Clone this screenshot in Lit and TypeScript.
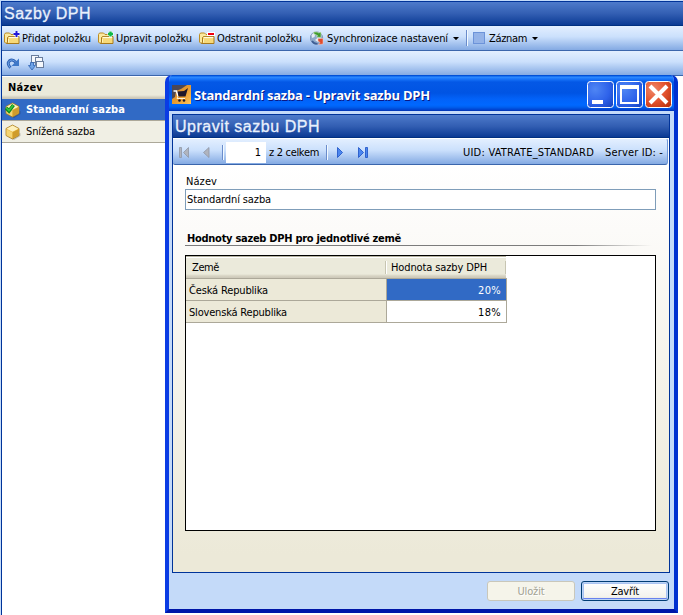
import { LitElement, html, css, svg } from "lit";
import { customElement, property } from "lit/decorators.js";

/** A label whose tracking is adjusted so that it fills a given width. */
@customElement("fit-label")
class FitLabel extends LitElement {
  @property() text = "";
  @property({ type: Number }) w = 0;
  static styles = css`
    :host { display: inline-block; white-space: pre; flex: none; }
  `;
  render() {
    return html`<span>${this.text}</span>`;
  }
  updated() {
    const s = this.renderRoot.querySelector("span") as HTMLElement;
    s.style.letterSpacing = "0px";
    const natural = s.getBoundingClientRect().width;
    s.style.letterSpacing = (this.w - natural) / this.text.length + "px";
  }
}

const t = (text: string, w: number) => html`<fit-label .text=${text} .w=${w}></fit-label>`;

const folder = (badge: unknown) => html`<svg class="ic" width="17" height="16" viewBox="0 0 17 16">
  <path d="M.5 4.500L1.500 3H5.500L7 4.500H12.500V13H1.500L.5 12Z" fill="#fbe9a0" stroke="#bd8d22"/>
  <path d="M3.500 12.500V7.500L4.500 6.500H15V13.500H2.500Z" fill="#f7d978" stroke="#a87a1c"/>
  <path d="M5 7.500H14.200" stroke="#fffbe0" stroke-width="1.200"/><path d="M4.500 9V12.500" stroke="#fff3b8"/>${badge}</svg>`;
const plus = (c: string) => svg`<path d="M12.500 1V7M9.500 4H15.500" stroke="#fff" stroke-width="3.400"/><path d="M12.500 1V7M9.500 4H15.500" stroke=${c} stroke-width="2"/>`;
const greenPlus = svg`<path d="M12.500 1V7M9.500 4H15.500" stroke="#fff" stroke-width="3"/><path d="M12.500 1.500V6.500M10 4H15" stroke="#10b848" stroke-width="2.400"/>`;
const minus = svg`<rect x="8" y="2" width="8" height="4" fill="#fff"/><rect x="9" y="3" width="6" height="2" fill="#f00010"/>`;

const globe = html`<svg class="ic" width="16" height="16" viewBox="0 0 16 16">
  <circle cx="6.500" cy="8" r="6.200" fill="#8ea9cc" stroke="#7b8fb2" stroke-width=".8"/>
  <path d="M1.500 5Q3 2.500 5.500 3L4.500 7L2 8ZM8 7.500L11 8L8 12L5 10Z" fill="#e6edf5"/>
  <path d="M3.500 2H7.500L8.500 3L11 2V7.500L6.500 7L7.500 5.500L4 4Z" fill="#3f9a2e" stroke="#d4ecc8" stroke-width=".6"/>
  <path d="M8 8.500H13V14L8.500 14.500L10 12.500L8 11Z" fill="#e04b2c" stroke="#f7cfc4" stroke-width=".5"/>
  <path d="M2 11Q4 14 7.500 13.800" stroke="#3f5f96" fill="none" stroke-width="1.600"/></svg>`;

const cube = (checked: boolean) => html`<svg class="cube" width="16" height="16" viewBox="0 0 16 16">
  <path d="M3 13L9 16L15.500 12V9Z" fill="#000" opacity=".18"/>
  <path d="M7.500 1L14 4.500V11.500L7.500 15L1 11.500V4.500Z" fill="#e7b63c" stroke="#a47c28" stroke-width=".8"/>
  <path d="M7.500 1.500L13.500 4.700L7.500 7.800L1.500 4.700Z" fill="#fdf1bd"/>
  <path d="M1.500 5.200L7.200 8.300V14.200L1.500 11.200Z" fill="#f4d474"/>
  <path d="M13.500 5.200L7.800 8.300V14.200L13.500 11.200Z" fill="#cf9c2c"/>
  ${checked ? svg`<path d="M1 6L4 9L8.500 3" fill="none" stroke="#0d8a1c" stroke-width="3.600"/><path d="M1.300 6L4 8.500L8.200 3.300" fill="none" stroke="#37c93e" stroke-width="1.600"/>` : ""}</svg>`;

const arrow = html`<svg class="drop" width="6" height="3" viewBox="0 0 6 3"><path d="M0 0H6L3 3.200Z" fill="#000"/></svg>`;

@customElement("vat-dialog")
class VatDialog extends LitElement {
  static styles = css`
    * { box-sizing: border-box; }
    :host { display: block; }
    svg { display: block; flex: none; }
    .win { width: 513px; height: 538px; background: #c4daf9; border-radius: 7px 7px 0 0; overflow: hidden;
      display: flex; flex-direction: column; border: solid #0831d9; border-width: 0 4px 4px;
      border-color: #0040e0 #0030d0 #0016a8 #0a3ce4; }
    .title { height: 36px; margin: 0 -4px; flex: none; display: flex; align-items: center; padding: 0 6px 0 7px;
      background: linear-gradient(#0048c8 0, #0058e6 1px, #2f8bff 2px, #1875fa 4px, #0458e6 7px, #0054e3 18px, #0262f8 24px, #0068ff 30px, #0060f0 32px, #0040cc 35px, #0030a8 36px); }
    .title fit-label { font: bold 13px/16px "Open Sans", sans-serif; color: #fff; text-shadow: 1px 1px 0 #0a1883; margin: 3px 0 0 3px; }
    .logo { margin-top: 2px; }
    .ctl { margin-left: auto; display: flex; gap: 2px; margin-top: 2px; }
    .body { margin: 3px 4px 0 3px; height: 459px; border: 1px solid #003399; flex: none; display: flex; flex-direction: column;
      background: linear-gradient(#fff 50px, #fcfbf9 25%, #ece9d8 96%); }
    .head { height: 23px; flex: none; background: linear-gradient(#4e7bcb, #335fb3 50%, #0b3a94); color: #e9f1fd; padding: 2px 0 0 2px;
      font: 16px/20px "Liberation Sans", Arial, sans-serif; -webkit-text-stroke: .3px #e9f1fd; border-bottom: 1px solid #003080; }
    .bar { height: 27px; flex: none; border-top: 1px solid #fff; border-bottom: 1px solid #3b66ac; border-radius: 0 3px 3px 2px;
      border-right: 1px solid #6f98d8; margin-right: 1px;
      background: linear-gradient(#e3efff, #cbe0fc 45%, #84aae3); display: flex; align-items: center; padding: 1px 4px 0 5px; }
    .sep { width: 2px; height: 15px; border-left: 1px solid #6a8ccb; border-right: 1px solid #f1f9ff; flex: none; }
    .num { width: 40px; height: 21px; background: #fff; text-align: right; padding: 4px 5px 0 0; line-height: 14px; margin: 0 3px 0 2px; }
    .bar fit-label { margin-top: 1px; }
    .uid { margin-left: auto; margin-right: 11px; }
    .form { padding: 10px 13px 0 12px; display: flex; flex-direction: column; }
    .lbl { height: 14px; padding-left: 1px; }
    .input { height: 21px; border: 1px solid #7f9db9; background: #fff; padding: 3px 0 0 1px; }
    .sect { margin-top: 22px; height: 13px; font-weight: bold; padding-left: 2px; }
    .rule { height: 1px; margin: 0 4px 9px 0; background: linear-gradient(90deg, #7c7c7c 390px, transparent); }
    .grid { height: 276px; border: 1px solid #000; background: #fff; }
    .gh { width: 320px; height: 22px; display: flex; background: linear-gradient(#b5b29f 0, #b5b29f 1px, #fff 1px, #fff 2px, #ebeadb 2px, #ebeadb 18px, #d6d2c2 20px, #cbc7b8 22px); }
    .gh div { height: 22px; padding: 5px 0 0 5px; position: relative; }
    .gh div::after { content: ""; position: absolute; right: -1px; top: 5px; height: 13px; border-left: 1px solid #c7c5b2; border-right: 1px solid #fff; }
    .gh .c1 { width: 200px; padding-left: 6px; } .gh .c2 { width: 120px; }
    .gr { display: flex; height: 22px; }
    .gr div { border-top: 1px solid #aca899; height: 23px; padding-top: 5px; }
    .gr .a { width: 201px; background: #ece9d8; border-right: 1px solid #aca899; padding-left: 3px; }
    .gr .b { width: 120px; border-right: 1px solid #aca899; text-align: right; padding-right: 5px; }
    .gr .sel { background: #316ac5; color: #fff; }
    .gr.last div { border-bottom: 1px solid #aca899; }
    .foot { display: flex; justify-content: flex-end; gap: 6px; padding: 8px 5px 0 0; }
    .btn { width: 88px; height: 20px; border: 1px solid #003c74; border-radius: 3px; text-align: center; padding-top: 3px;
      background: linear-gradient(#fff, #f4f3ee 80%, #e5e3da); box-shadow: inset 0 0 0 1px #bcd4f6, inset 0 -2px 0 #6982ee, inset 0 0 0 2px #a9c3f2; }
    .btn.off { border-color: #c9c7ba; background: #f5f4ea; color: #a1a192; box-shadow: none; text-shadow: 1px 1px 0 #fff; }
  `;
  render() {
    return html`<div class="win">
      <div class="title">
        <svg class="logo" width="19" height="19" viewBox="0 0 19 19"><defs><linearGradient id="o" x1="0" y1="0" x2="1" y2="1"><stop offset="0" stop-color="#c88a3a"/><stop offset=".5" stop-color="#e89a2e"/><stop offset="1" stop-color="#ffc45a"/></linearGradient></defs>
          <rect width="19" height="19" fill="url(#o)"/><path d="M0 0H15L9 4L4 6L3 12L0 14Z" fill="#4c4754"/><path d="M1.500 6H4.500L6 11" fill="none" stroke="#fff" stroke-width="1.600"/><path d="M5.500 6.500L12 6L16 3L13.500 11.500H6.500Z" fill="#20182a"/><path d="M6 11L5 13.500H13" fill="none" stroke="#fff3d6" stroke-width="1"/><circle cx="7.500" cy="15.500" r="1.300" fill="#20182a"/><circle cx="12" cy="15.500" r="1.300" fill="#20182a"/></svg>
        ${t("Standardní sazba - Upravit sazbu DPH", 236)}
        <div class="ctl">
          ${["min", "max", "close"].map((k) => html`<svg width="27" height="27" viewBox="0 0 27 27"><defs>
            <radialGradient id="b" cx=".3" cy=".3" r=".9"><stop offset="0" stop-color="#4f86f4"/><stop offset=".6" stop-color="#2e62ea"/><stop offset="1" stop-color="#1846c4"/></radialGradient>
            <radialGradient id="r" cx=".3" cy=".3" r=".9"><stop offset="0" stop-color="#f0886a"/><stop offset=".55" stop-color="#e2512c"/><stop offset="1" stop-color="#b8300c"/></radialGradient></defs>
            <rect x=".5" y=".5" width="26" height="26" rx="3" fill=${k === "close" ? "url(#r)" : "url(#b)"} stroke="#fff"/>
            ${k === "min" ? svg`<rect x="5" y="19" width="11" height="4" fill="#fff"/>` : k === "max" ? svg`<path d="M5 5V22H22V5Z" fill="none" stroke="#fff" stroke-width="2"/><path d="M4 6H23" stroke="#fff" stroke-width="4"/>` : svg`<path d="M5 5L22 22M22 5L5 22" stroke="#fff" stroke-width="4"/>`}</svg>`)}
        </div>
      </div>
      <div class="body">
        <div class="head">${t("Upravit sazbu DPH", 145)}</div>
        <div class="bar">
          <svg width="44" height="13" viewBox="0 0 44 13"><g fill="#b0b4be" stroke="#8f97a6" stroke-width=".8"><path d="M1.500 1.500H3.500V11.500H1.500ZM10.500 1.500V11.500L5.500 6.500ZM31 1.500V11.500L25.500 6.500Z"/></g></svg>
          <div class="sep"></div>
          <div class="num">1</div>
          ${t("z 2 celkem", 50)}
          <svg width="7" height="1"></svg><div class="sep"></div>
          <svg width="41" height="13" viewBox="0 0 41 13"><g fill="#4b86ee" stroke="#1a4fc4" stroke-width=".8"><path d="M9.500 1.500V11.500L14.500 6.500ZM30.500 1.500V11.500L35.500 6.500ZM37.500 1.500H39.500V11.500H37.500Z"/></g></svg>
          <div class="uid">${t("UID: VATRATE_STANDARD", 131)}</div>
          <div class="sid">${t("Server ID: -", 58)}</div>
        </div>
        <div class="form">
          <div class="lbl">${t("Název", 31)}</div>
          <div class="input">${t("Standardní sazba", 84)}</div>
          <div class="sect">${t("Hodnoty sazeb DPH pro jednotlivé země", 214)}</div>
          <div class="rule"></div>
          <div class="grid">
            <div class="gh"><div class="c1">${t("Země", 27)}</div><div class="c2">${t("Hodnota sazby DPH", 96)}</div></div>
            <div class="gr"><div class="a">${t("Česká Republika", 79)}</div><div class="b sel">${t("20%", 23)}</div></div>
            <div class="gr last"><div class="a">${t("Slovenská Republika", 98)}</div><div class="b">${t("18%", 23)}</div></div>
          </div>
        </div>
      </div>
      <div class="foot"><div class="btn off">${t("Uložit", 27)}</div><div class="btn">${t("Zavřít", 28)}</div></div>
    </div>`;
  }
}

@customElement("app-root")
class AppRoot extends LitElement {
  static styles = css`
    * { box-sizing: border-box; }
    :host { display: block; width: 683px; height: 615px; overflow: hidden; position: relative; background: #fff; color: #000;
      font: 11px/14px "DejaVu Sans Condensed", "DejaVu Sans", sans-serif; }
    svg { display: block; flex: none; }
    .frame { height: 615px; border: solid #c4dbf9; border-width: 1px 0 0 1px; }
    .inner { height: 614px; border-left: 1px solid #003399; }
    .head { height: 25px; border-top: 1px solid #003399; border-bottom: 1px solid #003080; padding: 2px 0 0 2px; color: #e9f1fd;
      background: linear-gradient(#4e7bcb, #335fb3 50%, #0b3a94); font: 16px/20px "Liberation Sans", Arial, sans-serif; -webkit-text-stroke: .3px #e9f1fd; }
    .bar { height: 25px; border-bottom: 1px solid #3b66ac; display: flex; align-items: center; padding-left: 2px;
      background: linear-gradient(#e3efff, #cbe0fc 45%, #84aae3); }
    .bar fit-label { margin-top: 2px; }
    .ic { margin-right: 1px; }
    .g { margin-right: 7px; }
    .drop { margin-right: 7px; margin-left: 5px; }
    .sep { width: 2px; height: 16px; border-left: 1px solid #6a8ccb; border-right: 1px solid #f1f9ff; margin-right: 5px; }
    .box { width: 12px; height: 12px; border: 1px solid #6c93d9; background: #94b3e8; margin-right: 4px; }
    .gh { width: 300px; height: 23px; background: linear-gradient(#fff 0, #fff 1px, #ebeadb 1px, #ebeadb 19px, #cbc7b8 22px); font-weight: bold; padding: 5px 0 0 6px; }
    .row { width: 300px; height: 22px; display: flex; align-items: center; padding-left: 3px; gap: 5px; background: #f0efe4; border-bottom: 1px solid #aca899; }
    .row fit-label { margin-top: 1px; }
    .row.on { background: #316ac5; color: #fff; font-weight: bold; }
    vat-dialog { position: absolute; left: 165px; top: 75px; }
  `;
  render() {
    return html`<div class="frame"><div class="inner">
      <div class="head">${t("Sazby DPH", 87)}</div>
      <div class="bar">
        ${folder(plus("#2018d8"))}<span class="g">${t("Přidat položku", 69)}</span>
        ${folder(greenPlus)}<span class="g">${t("Upravit položku", 76)}</span>
        ${folder(minus)}<span class="g">${t("Odstranit položku", 85)}</span>
        <svg width="1" height="1"></svg>${globe}${t("Synchronizace nastavení", 121)}${arrow}
        <div class="sep"></div><div class="box"></div>${t("Záznam", 38)}${arrow}
      </div>
      <div class="bar">
        <svg width="60" height="20" viewBox="0 0 60 20"><path d="M6.500 14.800Q2.500 10.500 5.500 7.800Q8.500 5.500 12 9.500" fill="none" stroke="#2f62b4" stroke-width="3"/><path d="M6.500 14.800Q2.500 10.500 5.500 7.800Q8.500 5.500 12 9.500" fill="none" stroke="#6fa3e6" stroke-width="1"/><path d="M15 5.500V13H7.500Z" fill="#3f78c8"/>
          <g fill="#f6f8fc" stroke="#6a7d9c"><rect x="27.500" y="2.500" width="7" height="7"/><rect x="31.500" y="4.500" width="7" height="7"/><rect x="32.500" y="8.500" width="7" height="6"/></g><path d="M26.500 9.500H29.500V12.500H31.500L28 17L24.500 12.500H26.500Z" fill="#6fa3e6" stroke="#2f62b4" stroke-width=".8"/></svg>
      </div>
      <div class="gh">${t("Název", 35)}</div>
      <div class="row on">${cube(true)}${t("Standardní sazba", 99)}</div>
      <div class="row">${cube(false)}${t("Snížená sazba", 69)}</div>
    </div></div>
    <vat-dialog></vat-dialog>`;
  }
}
